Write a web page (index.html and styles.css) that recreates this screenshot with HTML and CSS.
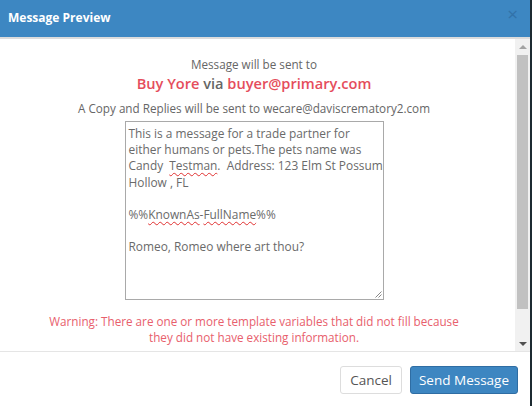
FILE: index.html
```html
<!DOCTYPE html>
<html lang="en">

<head>
    <meta charset="UTF-8">
    <meta name="viewport" content="width=device-width, initial-scale=1.0">
    <title>Message Preview</title>
    <link rel="stylesheet" href="styles.css">
</head>

<body>
    <div class="modal">
        <div class="modal-header">
            <span class="modal-title">Message Preview</span>
            <span class="close">&times;</span>
        </div>

        <div class="modal-body">
            <div class="body-content">
                <div class="sent-to">Message will be sent to</div>
                <div class="recipient">
                    <span class="hl">Buy Yore</span> via <span class="hl">buyer@primary.com</span>
                </div>
                <div class="copy-to">A Copy and Replies will be sent to wecare@daviscrematory2.com</div>

                <div class="message">
                    <div class="message-text">This is a message for a trade partner for
either humans or pets.The pets name was
Candy  <span class="typo">Testman</span>.  Address: 123 Elm St Possum
Hollow , FL

%%<span class="typo">KnownAs</span>-<span class="typo">FullName</span>%%

Romeo, Romeo where art thou?</div>
                    <svg class="grip" width="9" height="9" viewBox="0 0 9 9">
                        <path d="M8.5 2.5 L2.5 8.5 M8.5 5.5 L5.5 8.5" stroke="#888" stroke-width="1" fill="none"/>
                    </svg>
                </div>

                <div class="warning">Warning: There are one or more template variables that did not fill because they did not have existing information.</div>
            </div>

            <!-- barra de scroll dibujada -->
            <div class="scrollbar">
                <div class="arrow up"></div>
                <div class="track"><div class="thumb"></div></div>
                <div class="arrow down"></div>
            </div>
        </div>

        <div class="modal-footer">
            <button class="btn btn-default">Cancel</button>
            <button class="btn btn-primary">Send Message</button>
        </div>
    </div>
</body>

</html>
```

FILE: styles.css
```css
html,
body {
    margin: 0;
    height: 100%;
    background: #1c2a31;
}

body {
    font-family: 'Open Sans', 'Noto Sans', sans-serif;
    overflow: hidden;
}

.modal {
    width: 530px;
    height: 100%;
    background: #fff;
    display: flex;
    flex-direction: column;
}

.modal-header {
    height: 39px;
    background: #3d87c2;
    border-bottom: 2px solid #dcdcdc;
    display: flex;
    align-items: center;
    justify-content: space-between;
    padding: 0 12px 0 8px;
    box-sizing: border-box;
    flex: none;
}

.modal-title {
    color: #fff;
    font-weight: bold;
    font-size: 12px;
    margin-top: -3px;
}

.close {
    color: #3272a9;
    font-size: 19px;
    line-height: 1;
    margin-top: -8px;
}

.modal-body {
    height: 312px;
    flex: none;
    display: flex;
}

.body-content {
    flex: 1;
    text-align: center;
    padding: 17px 7px 0 0;
    color: #666;
    font-size: 11.7px;
    overflow: hidden;
}

.sent-to {
    line-height: 16px;
}

.recipient {
    font-size: 14.6px;
    font-weight: 600;
    line-height: 22px;
}

.hl {
    color: #e54d5c;
}

.copy-to {
    line-height: 16px;
    margin-top: 6px;
}

.message {
    position: relative;
    width: 259px;
    height: 179px;
    margin: 5px auto 0;
    border: 1px solid #a9a9a9;
    box-sizing: border-box;
    text-align: left;
    padding: 3px 0 2px 3px;
    color: #6a6a6a;
    overflow: hidden;
}

.message-text {
    font-size: 11.9px;
    line-height: 16.2px;
    white-space: pre;
}

.typo {
    text-decoration: underline wavy #e03030;
    text-decoration-thickness: 1px;
    text-underline-offset: 2px;
}

.grip {
    position: absolute;
    right: 1px;
    bottom: 1px;
}

.warning {
    color: #e8606c;
    line-height: 16px;
    width: 430px;
    margin: 13px auto 0;
}

.scrollbar {
    width: 15px;
    background: #f1f1f1;
    display: flex;
    flex-direction: column;
}

.arrow {
    height: 15px;
    display: flex;
    align-items: center;
    justify-content: center;
}

.arrow::before {
    content: "";
    border-left: 4px solid transparent;
    border-right: 4px solid transparent;
}

.arrow.up::before {
    border-bottom: 4px solid #a3a3a3;
}

.arrow.down::before {
    border-top: 4px solid #505050;
}

.track {
    flex: 1;
    padding: 1px 2px 27px;
    display: flex;
}

.thumb {
    flex: 1;
    background: #c1c1c1;
}

.modal-footer {
    border-top: 1px solid #e5e5e5;
    display: flex;
    justify-content: flex-end;
    gap: 8px;
    padding: 14px 12px 0 0;
    flex: 1;
    align-items: flex-start;
}

.btn {
    font-family: 'Open Sans', 'Noto Sans', sans-serif;
    font-size: 13.5px;
    height: 28px;
    padding: 0 9px;
    border-radius: 3px;
    cursor: pointer;
}

.btn-default {
    background: #fff;
    color: #555;
    border: 1px solid #ddd;
}

.btn-primary {
    background: #3d86c1;
    color: #fff;
    border: 1px solid #2f6da3;
    padding: 0 8px;
}
```
